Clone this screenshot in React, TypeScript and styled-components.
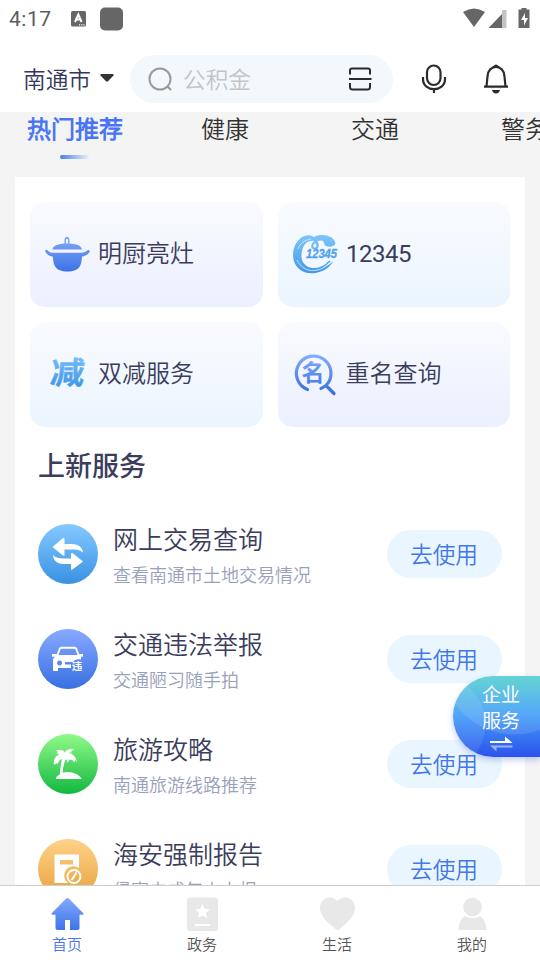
import React from 'react';
import styled, { createGlobalStyle } from 'styled-components';

const GlobalStyle = createGlobalStyle`
  * { box-sizing: border-box; }
  body {
    margin: 0;
    background: #f4f4f4;
    font-family: Roboto, "Noto Sans CJK SC DemiLight", "Noto Sans CJK SC", sans-serif;
    color: #3a3d5c;
    overflow: hidden;
  }
  svg { display: block; flex: none; overflow: visible; }
  button { font: inherit; border: 0; padding: 0; background: none; color: inherit; }
`;

const Screen = styled.div`
  position: relative;
  width: 540px;
  height: 960px;
  display: flex;
  flex-direction: column;
  overflow: hidden;
  background: #f4f4f4;
`;

const StatusBar = styled.div`
  flex: none;
  height: 37px;
  background: #fff;
  display: flex;
  align-items: center;
  justify-content: space-between;
  padding: 0 9px;
  color: #666;
`;
const StatusGroup = styled.div`
  display: flex;
  align-items: center;
`;
const Clock = styled.span`
  font-size: 21px;
  font-weight: 400;
  line-height: 36px;
  padding-top: 1px;
  letter-spacing: 0.5px;
  width: 62px;
  color: #5c5c5c;
`;

const Header = styled.header`
  flex: none;
  height: 75px;
  background: #fff;
  display: flex;
  align-items: center;
  padding: 9px 29px 0 23px;
`;
const City = styled.button`
  display: flex;
  align-items: center;
  gap: 9px;
  width: 107px;
  font-size: 22.7px;
  line-height: 44px;
  color: #34375a;
`;
const CityName = styled.span`
  padding-top: 4px;
`;
const SearchBox = styled.div`
  width: 263px;
  height: 48px;
  margin-right: 26px;
  border-radius: 24px;
  background: #f3f8fc;
  display: flex;
  align-items: center;
  padding: 0 20px 0 18px;
`;
const Placeholder = styled.span`
  flex: 1;
  margin-left: 10px;
  padding-top: 4px;
  font-size: 22.7px;
  line-height: 44px;
  color: #c3c5c7;
`;
const HeaderActions = styled.div`
  flex: 1;
  display: flex;
  justify-content: space-between;
`;

const Tabs = styled.nav`
  flex: none;
  height: 65px;
  display: flex;
  overflow: hidden;
`;
const Tab = styled.button<{ $active?: boolean }>`
  flex: none;
  width: 150px;
  height: 47px;
  display: flex;
  flex-direction: column;
  align-items: center;
  justify-content: space-between;
  font-size: 24px;
  line-height: 36px;
  font-weight: ${p => (p.$active ? 700 : 400)};
  color: ${p => (p.$active ? '#4a74f5' : '#333')};
`;
const TabMarker = styled.span`
  width: 30px;
  height: 4px;
  border-radius: 2px;
  background: linear-gradient(90deg, #4680e8, #f4f4f4);
`;

const Panel = styled.main`
  flex: 1;
  min-height: 0;
  overflow: hidden;
  margin: 0 15px;
  padding: 25px 15px 0;
  background: #fff;
`;
const CardGrid = styled.div`
  display: grid;
  grid-template-columns: 1fr 1fr;
  gap: 15px;
`;
const Card = styled.div<{ $end: string }>`
  height: 105px;
  border-radius: 15px;
  display: flex;
  align-items: center;
  gap: 8px;
  padding-left: 15px;
  font-size: 24px;
  line-height: 36px;
  background: linear-gradient(#f9fbfe, ${p => p.$end});
`;
const CardLabel = styled.span<{ $numeric: boolean }>`
  padding-bottom: ${p => (p.$numeric ? '2px' : '1px')};
  padding-left: ${p => (p.$numeric ? '0.5px' : '0')};
  letter-spacing: ${p => (p.$numeric ? '-0.5px' : 'normal')};
`;
const SectionTitle = styled.h2`
  margin: 18px 0 0 8px;
  font-family: "Noto Sans CJK SC Medium", "Noto Sans CJK SC", sans-serif;
  font-size: 27px;
  line-height: 40px;
  font-weight: 500;
`;
const ServiceList = styled.div`
  margin-top: 16px;
`;
const ServiceRow = styled.div`
  height: 105px;
  display: flex;
  align-items: center;
  padding: 0 8px;
`;
const ServiceText = styled.div`
  flex: 1;
  margin-left: 15px;
  padding-top: 6px;
`;
const ServiceName = styled.div`
  font-size: 25px;
  line-height: 36px;
`;
const ServiceNote = styled.div`
  margin-top: 2px;
  font-size: 18px;
  line-height: 30px;
  color: #98a1bc;
`;
const UseButton = styled.button`
  width: 115px;
  height: 48px;
  border-radius: 24px;
  background: #eaf6ff;
  color: #4377ea;
  font-size: 22.7px;
  line-height: 44px;
  padding: 4px 1px 0 0;
`;

const BottomNav = styled.nav`
  flex: none;
  height: 75px;
  display: flex;
  background: #fff;
  border-top: 1px solid #cfcfcf;
`;
const NavItem = styled.button<{ $active?: boolean }>`
  width: 135px;
  display: flex;
  flex-direction: column;
  align-items: center;
  padding: 9px 1px 0 0;
  font-size: 15px;
  line-height: 22px;
  color: ${p => (p.$active ? '#4a74f5' : '#555')};
`;
const NavLabel = styled.span`
  margin-top: 1px;
`;

const FloatingEntry = styled.button`
  position: absolute;
  right: 0;
  top: 676px;
  width: 87px;
  height: 81px;
  border-radius: 41px 0 0 41px;
  overflow: hidden;
  padding: 5px 0 0 9px;
  display: flex;
  flex-direction: column;
  align-items: center;
  font-family: "Noto Sans CJK SC", sans-serif;
  font-size: 19px;
  line-height: 25.5px;
  font-weight: 400;
  color: #fff;
  background:
    radial-gradient(circle at 61px -13px, rgba(255,255,255,0.11) 71px, transparent 72px),
    radial-gradient(circle at -15px 48px, rgba(255,255,255,0.09) 47px, transparent 48px),
    linear-gradient(#52cfce 0%, #409cf8 48%, #2d52ec 100%);
  box-shadow: 0 3px 6px rgba(50, 90, 220, 0.3);
`;

const Gradient = ({ id, from, to }: { id: string; from: string; to: string }) => (
  <linearGradient id={id} x1="0" y1="0" x2="0" y2="1">
    <stop stopColor={from} /><stop offset="1" stopColor={to} />
  </linearGradient>
);

const PotIcon = () => (
  <svg width="45" height="45" viewBox="0 0 45 45">
    <defs><linearGradient id="pot" gradientUnits="userSpaceOnUse" x1="0" y1="5" x2="0" y2="40">
      <stop stopColor="#82aafa" /><stop offset="1" stopColor="#3c72e5" /></linearGradient></defs>
    <path fill="url(#pot)" fillRule="evenodd" d="M7.500 17.500C8 13 14 12 19.500 11.500V8c0-4.500 5-4.500 5 0v3.500C31 12 36 13 37 17.500zM21 11.500h2V8c0-1.200-2-1.200-2 0z" />
    <path fill="url(#pot)" d="M0 18.500l2-.8c2 2.500 4 3 6 3h28c3 0 5-1 7.200-3l1.800 1.200c-1.500 3.200-4 5-8 5.600C36.500 33 35 39.500 22.500 39.500S8.500 33 7.800 24.500C4 24 1 22 0 18.500z" />
  </svg>
);

const HotlineIcon = () => (
  <svg width="45" height="45" viewBox="0 0 45 45">
    <defs><linearGradient id="hot" gradientUnits="userSpaceOnUse" x1="0" y1="3" x2="0" y2="42">
      <stop stopColor="#7cc6fc" /><stop offset="1" stopColor="#4297e7" /></linearGradient></defs>
    <path fill="url(#hot)" d="M21 5C11-1 0 10 0 23c0 13 11 19.500 21 18.200 10-1.200 17-7 19-12-6 6-14 8.500-21 7-9-2-12-9-10-17C10.500 12 15 8 21 9c-4 4-3.500 8 .5 8.600 5 .4 5-5.500 3-8.300 4-2 7-.5 7 3.700 3 2.500 9 2.500 11-1.500C41 3 28 1 21 5zM22 11c2 1.500 2 4.600 0 4.600-2.300 0-2-3 0-4.600z" />
    <path fill="none" stroke="url(#hot)" strokeWidth="1.700" d="M6 29c5 9 20 12 31 0" />
    <path fill="none" stroke="#dff0ff" strokeWidth=".8" d="M4 28c6 13 22 14 32 3M5 17c2-6 7-9 13-10" />
    <text x="13" y="26" fill="#4fa3ee" stroke="#4fa3ee" strokeWidth=".3" fontFamily="Liberation Sans, sans-serif" fontSize="12" fontWeight="700" fontStyle="italic" textLength="31" lengthAdjust="spacingAndGlyphs">12345</text>
  </svg>
);

const ReduceIcon = () => (
  <svg width="45" height="45" viewBox="0 0 45 45">
    <defs><Gradient id="reduce" from="#83caff" to="#378fe2" /></defs>
    <text transform="translate(4.500 32) skewX(-5) scale(1.100 1)" fill="url(#reduce)" stroke="url(#reduce)" strokeWidth=".4" fontFamily="Noto Sans CJK SC, sans-serif" fontSize="31" fontWeight="700">减</text>
  </svg>
);

const NameSearchIcon = () => (
  <svg width="45" height="45" viewBox="0 0 45 45">
    <defs><linearGradient id="name" gradientUnits="userSpaceOnUse" x1="0" y1="3" x2="0" y2="43">
      <stop stopColor="#82adff" /><stop offset="1" stopColor="#356ce0" /></linearGradient></defs>
    <path d="M14.500 37.500A17.300 17.300 0 1 1 33 33.500L28 36.500M33 33.500L41 41.500" fill="none" stroke="url(#name)" strokeWidth="3.200" strokeLinecap="round" strokeLinejoin="round" />
    <text x="20" y="28.500" textAnchor="middle" fill="url(#name)" fontFamily="Noto Sans CJK SC, sans-serif" fontSize="23" fontWeight="700">名</text>
  </svg>
);

const RoundBase = ({ id, from, to, children }: { id: string; from: string; to: string; children: React.ReactNode }) => (
  <svg width="60" height="60" viewBox="0 0 60 60" fill="#fff">
    <defs><Gradient id={id} from={from} to={to} /></defs>
    <circle cx="30" cy="30" r="30" fill={`url(#${id})`} />
    {children}
  </svg>
);

const SwapIcon = () => (
  <RoundBase id="swap" from="#85c9ff" to="#3991e2">
    <path d="M14.500 23L25 14q1.500-.5 1.500 1v5h7.500c7 .3 10.500 3.500 11 8.500-3-2.500-6-3-10-3h-8.500V31q0 1.500-1.500.5z" />
    <path d="M45 37.500L34.500 29q-1.500-.5-1.500 1v4.500h-7c-5 0-8.500-.8-11-3.500.5 6 4.500 9 11 9h7V45q0 1.500 1.500.5z" />
  </RoundBase>
);
const CarIcon = () => (
  <RoundBase id="car" from="#88aaff" to="#386fe2">
    <path fill="none" stroke="#fff" strokeWidth="2" d="M19.500 26l2.200-6q.5-1.200 1.800-1.200h13q1.300 0 1.800 1.200l2.200 6" />
    <path fillRule="evenodd" d="M14 25h4.500l1 1h21l1-1H45v2.700h-2V30.500c-4.500-.5-6.500.5-8 2.500H27v2.500h6V39H20v3h-5V30l2-2.300h-3zM21.500 31.500a2.500 2.500 0 1 0 .1 0z" />
    <text x="33.800" y="41" fontFamily="Noto Sans CJK SC, sans-serif" fontSize="10.500" fontWeight="700">违</text>
  </RoundBase>
);
const PalmIcon = () => (
  <RoundBase id="palm" from="#91fa88" to="#12b840">
    <path d="M27 19c-1-3-5-4-9.500-2.500l3 1.500-2 1 3 1.500c-4 1-6.500 5.500-5.500 10.500l3-2 .5 1.500c1-3 2-4.500 4.500-5.500-1 5-2 10-2.200 15.500-2 1-3.800 2-4 4.500h26c-2-4-8-7-14-7-2 0-3.500.3-5 .8.200-5 .8-9 3-13.300l1.500.5-.5 3 3-3.500c2 .2 3.500 1 4.500 3l1-2.500 1.500 2.500c-.5-6-4-9-8.500-9.500l4-1-1.500-1 3.500-1.500c-4-1.500-8.500 0-9.300 3z" />
  </RoundBase>
);
const ReportIcon = () => (
  <RoundBase id="report" from="#ffd28a" to="#e7a13c">
    <path fillRule="evenodd" d="M16.500 15.500H41V29a9 9 0 0 0-11 15H16.500zM22 21v4.500h13V21z" />
    <circle cx="36" cy="37.500" r="6.500" fill="none" stroke="#fff" strokeWidth="2" />
    <path d="M32.700 40.500l5-7.500 1.700 1-5 7.500z" />
  </RoundBase>
);

const cards = [
  { label: '明厨亮灶', end: '#eceffe', Icon: PotIcon },
  { label: '12345', end: '#ebf5ff', Icon: HotlineIcon },
  { label: '双减服务', end: '#ebf5ff', Icon: ReduceIcon },
  { label: '重名查询', end: '#eceffe', Icon: NameSearchIcon },
];
const services = [
  { name: '网上交易查询', note: '查看南通市土地交易情况', Icon: SwapIcon },
  { name: '交通违法举报', note: '交通陋习随手拍', Icon: CarIcon },
  { name: '旅游攻略', note: '南通旅游线路推荐', Icon: PalmIcon },
  { name: '海安强制报告', note: '侵害未成年人上报', Icon: ReportIcon },
];
const navItems = [
  {
    label: '首页',
    icon: <><defs><Gradient id="home" from="#82a9ff" to="#3e74e6" /></defs>
      <path fill="url(#home)" d="M17.200 3.500q1.300-1.200 2.600 0L34.500 18.500q.5 1.200-1 1.200h-3V33q0 2-2 2H21V25h-5v10H8.500q-2 0-2-2V19.700h-3q-1.500 0-1-1.200z" /></>,
  },
  {
    label: '政务',
    icon: <><rect x="3" y="2.500" width="31" height="33.500" rx="3" fill="#e8e8e8" />
      <path fill="#fff" d="M18.500 9l2.200 4.800 5.200.6-3.900 3.500 1 5.200-4.500-2.600-4.500 2.600 1-5.200-3.900-3.500 5.200-.6zM11 29h15v2H11z" /></>,
  },
  { label: '生活', icon: <path fill="#e8e8e8" d="M18.500 6C13-.5 1 2 1 13c0 8 8 15 16 21.500q1.500 1 3 0C28 28 36 21 36 13 36 2 24-.5 18.500 6z" /> },
  { label: '我的', icon: <><circle cx="18.500" cy="12" r="9.300" fill="#e8e8e8" /><path fill="#e8e8e8" d="M11 21q7.500 4.500 15 0c4 2 6 7 6.500 14h-28C5 28 7 23 11 21z" /></> },
];

export default function App() {
  return (
    <>
      <GlobalStyle />
      <Screen>
        <StatusBar>
          <StatusGroup>
            <Clock>4:17</Clock>
            <svg width="53" height="24" viewBox="0 0 53 24" fill="#666">
              <rect y="4" width="15" height="15.500" rx="1.500" />
              <path fill="none" stroke="#fff" strokeWidth="2" d="M4 15L7.300 7.500l3.300 7.500M5.200 12.500h4.300" />
              <path fill="#fff" d="M8 17.300h1.200v1.200H8zM10.200 17.300h1.200v1.200h-1.200zM12.400 17.300h1.200v1.200h-1.200z" />
              <rect x="29" y="0.500" width="23" height="23" rx="5" />
            </svg>
          </StatusGroup>
          <svg width="70" height="24" viewBox="0 0 70 24" fill="#666">
            <path d="M2 5q11-7 22 0L13 20z" />
            <path fill="#c4c4c4" d="M41 3h4.500v18H41z" /><path d="M27.500 21L41 7v14z" />
            <path d="M60.500 1h5v1.500h3V21h-11V2.500h3z" />
            <path fill="#fff" d="M64 6l-4 7h3v5.500l4-7.500h-3z" />
          </svg>
        </StatusBar>
        <Header>
          <City>
            <CityName>南通市</CityName>
            <svg width="14" height="11" viewBox="0 0 14 11"><path fill="#333" d="M1 0h12q1 .5.500 1.500L8 7.300q-1 .8-2 0L.5 1.500Q0 .5 1 0z" /></svg>
          </City>
          <SearchBox>
            <svg width="25" height="25" viewBox="0 0 25 25" fill="none" stroke="#999" strokeWidth="2"><circle cx="12" cy="12" r="10.500" /><path d="M19.500 19.500l3 3" strokeLinecap="round" /></svg>
            <Placeholder>公积金</Placeholder>
            <svg width="25" height="24" viewBox="0 0 25 24" fill="none" stroke="#2b2b2b" strokeWidth="2">
              <path d="M2 7.500V3.500q0-2 2-2h16q2 0 2 2v4M1 12h22.500M2 16v4q0 2.500 2.500 2.500h15q2.500 0 2.500-2.500v-4" />
            </svg>
          </SearchBox>
          <HeaderActions>
            <svg width="30" height="30" viewBox="0 0 30 30" fill="none" stroke="#2b2b2b" strokeWidth="2.200">
              <rect x="8" y="1.500" width="13.500" height="19.500" rx="6.700" />
              <path d="M4 13v2c0 13.500 22 13.500 22 0v-2M15 25v4" />
            </svg>
            <svg width="30" height="30" viewBox="0 0 30 30" fill="none" stroke="#2b2b2b" strokeWidth="2.200">
              <path d="M3 22.700h24M5.500 22.500L6.500 12.500C7-.3 23-.3 23.500 12.500l1 10" />
              <path fill="#2b2b2b" stroke="none" d="M11.500 3q3.500-5 7 0zM11 26h8q-1 3.500-4 3.500T11 26z" />
            </svg>
          </HeaderActions>
        </Header>
        <Tabs>
          <Tab $active>热门推荐<TabMarker /></Tab>
          <Tab>健康</Tab>
          <Tab>交通</Tab>
          <Tab>警务</Tab>
        </Tabs>
        <Panel>
          <CardGrid>
            {cards.map(({ label, end, Icon }) => (
              <Card key={label} $end={end}><Icon /><CardLabel $numeric={/^\d+$/.test(label)}>{label}</CardLabel></Card>
            ))}
          </CardGrid>
          <SectionTitle>上新服务</SectionTitle>
          <ServiceList>
            {services.map(({ name, note, Icon }) => (
              <ServiceRow key={name}>
                <Icon />
                <ServiceText><ServiceName>{name}</ServiceName><ServiceNote>{note}</ServiceNote></ServiceText>
                <UseButton>去使用</UseButton>
              </ServiceRow>
            ))}
          </ServiceList>
        </Panel>
        <BottomNav>
          {navItems.map(({ label, icon }, i) => (
            <NavItem key={label} $active={i === 0}>
              <svg width="37" height="38" viewBox="0 0 37 38">{icon}</svg>
              <NavLabel>{label}</NavLabel>
            </NavItem>
          ))}
        </BottomNav>
        <FloatingEntry>
          <span>企业</span>
          <span>服务</span>
          <svg width="24" height="17" viewBox="0 0 24 17" fill="#fff">
            <path d="M1 9h15V4.500L23.500 11H1z" />
            <path opacity=".5" d="M23.500 13.500H1l6.500 6v-4h16z" />
          </svg>
        </FloatingEntry>
      </Screen>
    </>
  );
}
